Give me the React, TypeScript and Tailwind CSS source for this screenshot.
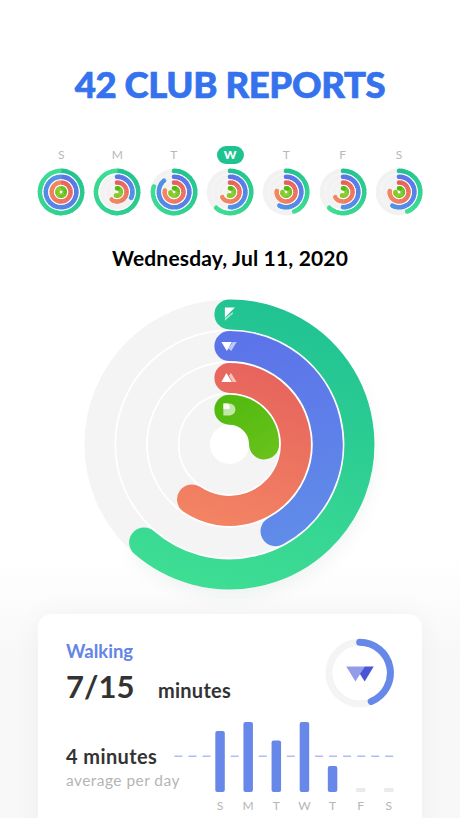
type Ring = { radius: number; from: number[]; to: number[] };

const RINGS: Ring[] = [
  { radius: 21.2, from: [33, 194, 143], to: [63, 222, 148] },
  { radius: 15.3, from: [92, 116, 232], to: [80, 146, 230] },
  { radius: 9.4, from: [229, 98, 92], to: [243, 134, 96] },
  { radius: 3.7, from: [82, 186, 16], to: [140, 200, 36] },
];

const DAYS = [
  { label: "S", angles: [360, 360, 360, 360] },
  { label: "M", angles: [360, 112, 215, 195] },
  { label: "T", angles: [285, 318, 278, 262] },
  { label: "W", angles: [221, 180, 236, 195], active: true },
  { label: "T", angles: [157, 206, 275, 268] },
  { label: "F", angles: [221, 180, 236, 195] },
  { label: "S", angles: [157, 206, 275, 268] },
];

const BARS = [
  { label: "S", height: 61 },
  { label: "M", height: 70 },
  { label: "T", height: 51.5 },
  { label: "W", height: 70 },
  { label: "T", height: 26 },
  { label: "F", height: 4 },
  { label: "S", height: 4 },
];

function point(c: number, r: number, deg: number) {
  const a = (deg * Math.PI) / 180;
  return [c + r * Math.sin(a), c - r * Math.cos(a)];
}

function arc(c: number, r: number, start: number, end: number) {
  const [x1, y1] = point(c, r, start);
  const [x2, y2] = point(c, r, end);
  return `M${x1} ${y1}A${r} ${r} 0 ${end - start > 180 ? 1 : 0} 1 ${x2} ${y2}`;
}

function mix(a: number[], b: number[], t: number) {
  return `rgb(${a.map((v, i) => Math.round(v + (b[i] - v) * t)).join(",")})`;
}

function MiniArc({ ring, angle }: { ring: Ring; angle: number }) {
  const steps = 24;
  const size = angle / steps;
  return (
    <g fill="none" strokeWidth="4.8">
      {Array.from({ length: steps }, (_, i) => (
        <path
          key={i}
          d={arc(24, ring.radius, i * size, Math.min((i + 1) * size + 2, angle))}
          stroke={mix(ring.from, ring.to, i / (steps - 1))}
          strokeLinecap={angle < 360 && (i === 0 || i === steps - 1) ? "round" : "butt"}
        />
      ))}
    </g>
  );
}

function MiniRings({ angles }: { angles: number[] }) {
  return (
    <svg className="mt-1 block h-12 w-12" viewBox="-0.3 -0.2 48.4 48.4">
      <circle cx="24" cy="24" r="23.6" fill="#f2f2f2" />
      {RINGS.slice(1).map((ring) => (
        <circle key={ring.radius} cx="24" cy="24" r={ring.radius + 2.9} fill="none" stroke="#fff" strokeWidth="0.7" opacity="0.6" />
      ))}
      {RINGS.map((ring, i) => (
        <g key={ring.radius}>
          {i > 0 && (
            <path d={arc(24, ring.radius + 2.9, 0, Math.min(angles[i - 1], 359.9))} fill="none" stroke="#fff" strokeWidth="1.3" />
          )}
          <MiniArc ring={ring} angle={angles[i]} />
        </g>
      ))}
      <circle cx="24" cy="24" r="1.2" fill="#fff" opacity="0.8" />
    </svg>
  );
}

function BigRings() {
  return (
    <svg className="block h-[330px] w-[330px]" viewBox="-0.4 -0.4 330 330">
      <defs>
        <linearGradient id="green" gradientUnits="userSpaceOnUse" x1="210" y1="20" x2="130" y2="310">
          <stop stopColor="#20c292" />
          <stop offset="1" stopColor="#3fde94" />
        </linearGradient>
        <linearGradient id="blue" gradientUnits="userSpaceOnUse" x1="170" y1="50" x2="210" y2="265">
          <stop stopColor="#5c72e9" />
          <stop offset="1" stopColor="#608ce9" />
        </linearGradient>
        <linearGradient id="red" gradientUnits="userSpaceOnUse" x1="195" y1="85" x2="145" y2="245">
          <stop stopColor="#e6635d" />
          <stop offset="1" stopColor="#f38463" />
        </linearGradient>
        <linearGradient id="lime" gradientUnits="userSpaceOnUse" x1="160" y1="115" x2="200" y2="180">
          <stop stopColor="#50b90d" />
          <stop offset="1" stopColor="#68c21b" />
        </linearGradient>
        <filter id="soft" x="-20%" y="-20%" width="140%" height="140%">
          <feGaussianBlur stdDeviation="9" />
        </filter>
      </defs>

      <path d={arc(165, 130, 60, 225)} transform="translate(2 9)" fill="none" stroke="#1d5540" strokeWidth="26" opacity="0.06" filter="url(#soft)" />
      <circle cx="165" cy="165" r="145" fill="#f4f4f4" />
      <g fill="none" stroke="#fff" strokeWidth="1.8">
        <circle cx="165" cy="165" r="114.1" />
        <circle cx="165" cy="165" r="82.4" />
        <circle cx="165" cy="165" r="50.7" />
      </g>
      <circle cx="165" cy="165" r="19.6" fill="#fff" />

      <g fill="none" strokeWidth="30" strokeLinecap="round">
        <path d={arc(165, 130, 0, 221)} stroke="url(#green)" />
        <path d={arc(165, 98.3, 0, 152)} stroke="url(#blue)" />
        <path d={arc(165, 66.5, 0, 214.2)} stroke="url(#red)" />
        <path d={arc(165, 34.7, 0, 90)} stroke="url(#lime)" />
      </g>

      <g fill="#fff">
        <path d="M160.5 28h10l-10 10z" />
        <path d="M160.5 38.7l8-6.2v1.8l-8 7z" opacity="0.6" />
        <path d="M157 62.7h10.5l-5 9z" />
        <path d="M168.3 62.7h4l-5.5 9-2.8-2.5z" opacity="0.6" />
        <path d="M157 102.5l5-9 5.5 9z" />
        <path d="M164.6 96l2-2.5 5.6 9h-4z" opacity="0.6" />
        <path d="M159 124h6a6 6 0 0 1 0 12H159z" opacity="0.65" />
        <path d="M159 124h4.5a5 5 0 0 1 1.5 5.5h-6z" opacity="0.85" />
      </g>
    </svg>
  );
}

function WalkingDial() {
  return (
    <svg className="block h-[70px] w-[70px]" viewBox="0.3 0 70 70">
      <circle cx="35" cy="35" r="30.7" fill="none" stroke="#f4f4f4" strokeWidth="7" />
      <path d={arc(35, 30.7, 0, 158)} fill="none" stroke="#6688e8" strokeWidth="7" strokeLinecap="round" />
      <path d="M21.5 28.5h18.5l-9.2 15z" fill="#929ce9" />
      <path d="M40 28.5h9l-9 15-4.8-7.4z" fill="#4c56d4" />
    </svg>
  );
}

export default function App() {
  return (
    <main className="flex h-[818px] w-[460px] flex-col overflow-hidden bg-linear-to-b from-white from-68% to-[#f8f8f8] to-80% font-['Lato',sans-serif]">
      <h1 className="mt-[62px] text-center text-[36.5px] leading-[44px] font-black tracking-[-0.35px] whitespace-nowrap text-[#3572ee] [-webkit-text-stroke:0.7px_#3572ee]">
        42 CLUB REPORTS
      </h1>

      <div className="mt-[40px] ml-[33px] flex">
        {DAYS.map((day, i) => (
          <div key={i} className="flex w-[56.3px] flex-col items-center">
            <span
              className={
                day.active
                  ? "flex h-[18px] w-[27px] items-center justify-center rounded-full bg-[#1fc391] text-xs font-black text-white"
                  : "flex h-[18px] items-center text-xs text-[#b8b8b8]"
              }
            >
              {day.label}
            </span>
            <MiniRings angles={day.angles} />
          </div>
        ))}
      </div>

      <h2 className="mt-[30px] text-center text-[21px] leading-6 font-bold tracking-[0.17px] text-black">
        Wednesday, Jul 11, 2020
      </h2>

      <div className="mt-[9px] ml-[64px]">
        <BigRings />
      </div>

      <section className="mt-[5px] ml-[38px] h-[230px] w-[384px] shrink-0 rounded-t-[14px] bg-white pt-[24px] pl-7 shadow-[0_0_28px_rgba(0,0,0,0.045)]">
        <div className="flex justify-between pr-[27px]">
          <div>
            <h3 className="pt-px text-[18.5px] leading-6 font-bold text-[#6484e8]">Walking</h3>
            <p className="mt-[5px] flex items-baseline text-[#333]">
              <span className="w-[92px] text-[31px] leading-9 font-bold">7/15</span>
              <span className="text-[20px] font-bold tracking-[0.25px]">minutes</span>
            </p>
          </div>
          <WalkingDial />
        </div>

        <div className="mt-[13px] flex">
          <div className="w-[108px] shrink-0 pt-[23px] whitespace-nowrap">
            <p className="text-[20px] leading-6 font-bold tracking-[0.4px] text-[#333]">4 minutes</p>
            <p className="mt-px text-[15.5px] leading-[22px] tracking-[0.45px] text-[#b5b5b5]">average per day</p>
          </div>
          <div className="w-[240px]">
            <svg className="block h-[71px] w-[240px]" viewBox="0 0 240 71">
              <path d="M0.4 35.3H219.5" stroke="#b0bdf0" strokeWidth="1.5" strokeDasharray="8 6.06" />
              {BARS.map((bar, i) => (
                <rect
                  key={i}
                  x={41.3 + i * 28.13}
                  y={71 - bar.height}
                  width="9.5"
                  height={bar.height}
                  rx={bar.height > 4 ? 2 : 1}
                  fill={bar.height > 4 ? "#6788e8" : "#ebebeb"}
                />
              ))}
            </svg>
            <div className="mt-1.5 ml-[32px] flex text-[12px] leading-4 text-[#b5b5b5]">
              {BARS.map((bar, i) => (
                <span key={i} className="w-[28.13px] text-center">
                  {bar.label}
                </span>
              ))}
            </div>
          </div>
        </div>
      </section>
    </main>
  );
}
